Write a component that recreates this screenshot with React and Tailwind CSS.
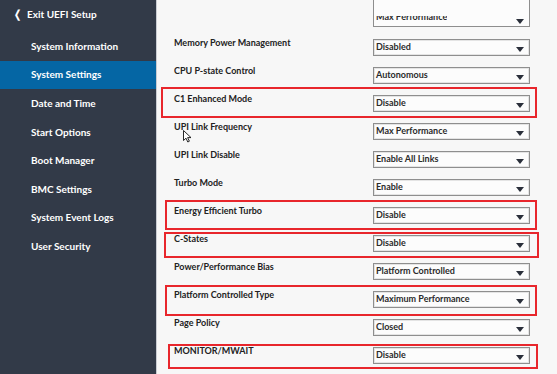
const menu = [
  "System Information",
  "System Settings",
  "Date and Time",
  "Start Options",
  "Boot Manager",
  "BMC Settings",
  "System Event Logs",
  "User Security",
];

const rows = [
  { label: "Memory Power Management", value: "Disabled" },
  { label: "CPU P-state Control", value: "Autonomous" },
  { label: "C1 Enhanced Mode", value: "Disable" },
  { label: "UPI Link Frequency", value: "Max Performance" },
  { label: "UPI Link Disable", value: "Enable All Links" },
  { label: "Turbo Mode", value: "Enable" },
  { label: "Energy Efficient Turbo", value: "Disable" },
  { label: "C-States", value: "Disable" },
  { label: "Power/Performance Bias", value: "Platform Controlled" },
  { label: "Platform Controlled Type", value: "Maximum Performance" },
  { label: "Page Policy", value: "Closed" },
  { label: "MONITOR/MWAIT", value: "Disable" },
];

// hand-drawn annotation boxes over the screenshot
const marks = [
  "left-[161px] top-[87px] w-[376px] h-[31px]",
  "left-[165px] top-[200px] w-[372px] h-[30px]",
  "left-[164px] top-[232px] w-[375px] h-[26px]",
  "left-[165px] top-[285px] w-[372px] h-[31px]",
  "left-[168px] top-[344px] w-[370px] h-[25px]",
];

function Arrow() {
  return (
    <svg width="8" height="5" viewBox="0 0 8 5" className="shrink-0">
      <path d="M0 0 H8 L4 5 Z" fill="#2a2f3a" />
    </svg>
  );
}

function Select({ value }) {
  return (
    <div className="w-[157px] h-[17px] border border-[#8e8e8e] bg-[#fcfcfc] shadow-[inset_0_0_0_1px_#e4e4e4] flex items-start justify-between pl-[2px] pr-[5px]">
      <span className="text-[9px] leading-[12px] pt-[1px] font-bold text-[#2b2b2b]">{value}</span>
      <div className="pt-[7px]">
        <Arrow />
      </div>
    </div>
  );
}

export default function App() {
  return (
    <div
      className="relative w-[557px] h-[374px] flex overflow-hidden bg-[#f7f7f7]"
      style={{ fontFamily: "Lato, 'Open Sans', sans-serif" }}
    >
      {/* Sidebar */}
      <div className="w-[157px] h-full bg-[#323a48] border-r border-[#c9ccd2] flex flex-col shrink-0">
        <div className="h-[32px] flex items-start pt-[7px] pl-[13px] gap-[5px] text-white">
          <span className="text-[11px] leading-[14px] font-bold">❬</span>
          <span className="text-[10px] leading-[14px] font-bold">Exit UEFI Setup</span>
        </div>
        {menu.map((m) => (
          <div
            key={m}
            className={
              "h-[28.6px] flex items-center pl-[31px] text-[10px] font-bold text-white " +
              (m === "System Settings" ? "bg-[#0566a4]" : "")
            }
          >
            {m}
          </div>
        ))}
      </div>

      {/* Settings list, scrolled so the first entry is half hidden */}
      <div className="flex-1 flex flex-col">
        <div className="h-[33px] pl-[216px]">
          <div className="w-[157px] h-[27px] border-x border-b border-[#8e8e8e] bg-[#fcfcfc] flex justify-between items-start pl-[2px] pr-[5px]">
            <div className="mt-[16px] h-[9px] overflow-hidden">
              <div className="-mt-[5px] text-[9px] leading-[12px] font-bold text-[#2b2b2b]">Max Performance</div>
            </div>
            <div className="pt-[19px]">
              <Arrow />
            </div>
          </div>
        </div>
        {rows.map((r) => (
          <div key={r.label} className="h-[28px] flex items-start pl-[17px]">
            <div className="w-[199px] pt-[4px] text-[9px] leading-[12px] font-bold text-[#222]">{r.label}</div>
            <div className="pt-[6px]">
              <Select value={r.value} />
            </div>
          </div>
        ))}
      </div>

      {/* red annotation boxes */}
      {marks.map((c) => (
        <div key={c} className={"absolute border-2 border-[#e8262c] pointer-events-none " + c} />
      ))}

      {/* mouse cursor */}
      <svg className="absolute left-[183px] top-[130px]" width="9" height="13" viewBox="0 0 9 13">
        <path d="M0.5 0.5 V10.5 L3 8.2 L4.8 12 L6.4 11.2 L4.6 7.6 H8 Z" fill="#fff" stroke="#111" strokeWidth="0.9" strokeLinejoin="round" />
      </svg>
    </div>
  );
}
